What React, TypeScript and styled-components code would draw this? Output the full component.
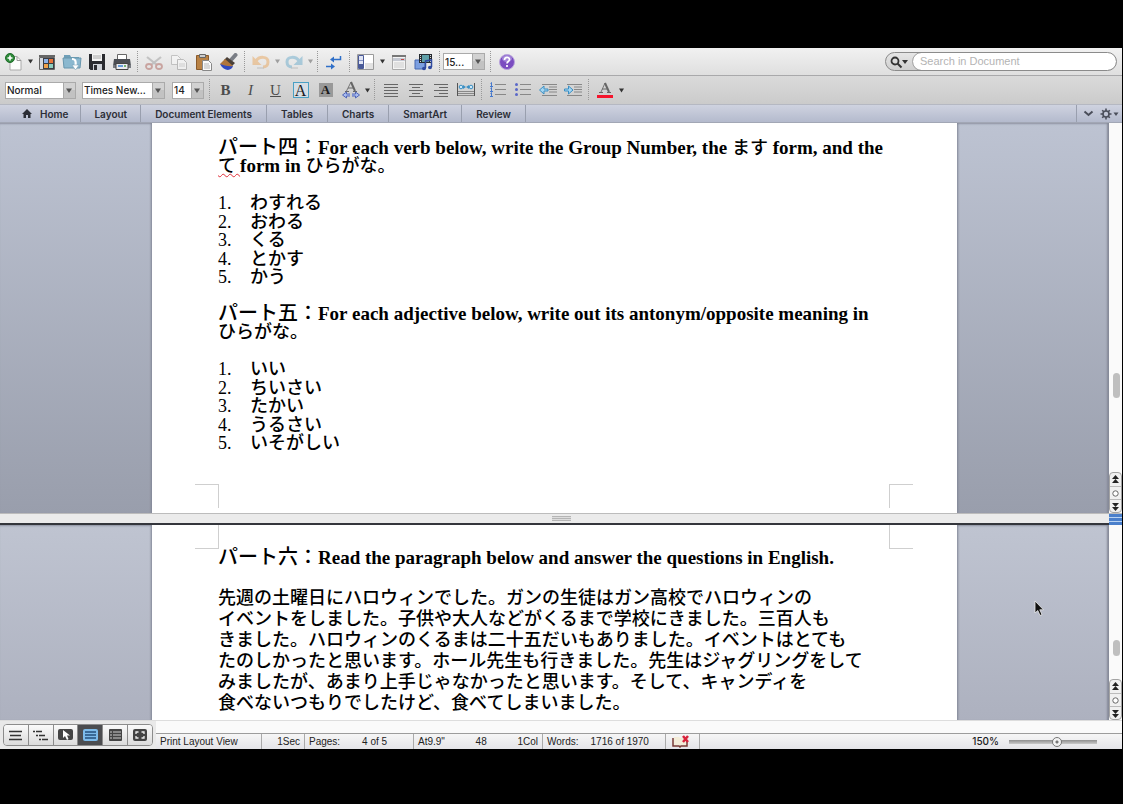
import React from "react";
import styled, { createGlobalStyle } from "styled-components";

const Global = createGlobalStyle`
  * { box-sizing: border-box; }
  html, body { margin: 0; background: #000; }
  body { font-family: "Liberation Sans", "Noto Sans CJK JP", sans-serif; color: #222; }
  button, input, select { font: inherit; color: inherit; margin: 0; }
`;

const Screen = styled.div`
  min-height: 100vh;
  display: flex;
  flex-direction: column;
  padding: 48px 1px 55px 0;
  background: #000;
`;

const Window = styled.main`
  flex: 1;
  display: flex;
  flex-direction: column;
  background: #fafafa;
`;

/* ---------- Toolbars ---------- */

const StandardBar = styled.div`
  display: flex;
  align-items: center;
  height: 28px;
  padding: 0 5px 0 1px;
  background: linear-gradient(#f1f1f1, #dfdfdf);
  border-bottom: 1px solid #a9a9ab;
`;

const FormatBar = styled.div`
  display: flex;
  align-items: center;
  height: 28px;
  padding-left: 5px;
  background: linear-gradient(#dadada, #cbcbcb);
`;

const ToolButton = styled.button<{ $faded?: boolean }>`
  display: flex;
  align-items: center;
  justify-content: center;
  width: 25px;
  height: 24px;
  padding: 0;
  border: 0;
  background: none;
  opacity: ${(p) => (p.$faded ? 0.4 : 1)};
  svg { display: block; }
`;

const ArrowButton = styled(ToolButton)`
  width: 8px;
`;

const Separator = styled.span`
  width: 7px;
  height: 22px;
  background: linear-gradient(#999 1px, transparent 1px) 3px 0 / 1px 2px repeat-y;
`;

const Glyph = styled.span<{ $italic?: boolean; $underline?: boolean }>`
  font: ${(p) => (p.$italic ? "italic" : p.$underline ? "normal" : "bold")} 15px/18px "Liberation Serif", serif;
  text-decoration: ${(p) => (p.$underline ? "underline" : "none")};
  color: #4c4c4c;
`;

const BoxedGlyph = styled.span<{ $shaded?: boolean }>`
  width: ${(p) => (p.$shaded ? 14 : 16)}px;
  height: ${(p) => (p.$shaded ? 14 : 16)}px;
  font: ${(p) => (p.$shaded ? "bold 13px/14px" : "16px/15px")} "Liberation Serif", serif;
  text-align: center;
  color: #1a1a1a;
  border: ${(p) => (p.$shaded ? "0" : "1px solid #4aa0c4")};
  background: ${(p) => (p.$shaded ? "#999" : "#d6dde4")};
`;

const Combo = styled.span<{ $width: number; $after?: number }>`
  position: relative;
  display: block;
  width: ${(p) => p.$width}px;
  height: 17px;
  margin-right: ${(p) => p.$after ?? 6}px;
  select {
    display: block;
    appearance: none;
    width: 100%;
    height: 17px;
    padding: 0 13px 0 1px;
    border: 1px solid #aaa;
    border-radius: 0;
    background: #fff;
    font: 500 10px/14px Inter, sans-serif;
    color: #222;
  }
  svg {
    position: absolute;
    right: 1px;
    top: 1px;
    pointer-events: none;
  }
`;

const SearchBox = styled.div`
  display: flex;
  width: 232px;
  height: 19px;
  margin-left: auto;
  border: 1px solid #8b8b8b;
  border-radius: 10px;
  background: linear-gradient(#e6e6e6, #cfcfcf);
  overflow: hidden;
  button {
    width: 27px;
    padding: 0 0 0 3px;
    border: 0;
    background: none;
  }
  svg { display: block; }
  input {
    flex: 1;
    min-width: 0;
    padding: 0 7px;
    border: 0;
    border-radius: 9px;
    background: #fff;
    font: 11px/17px "Liberation Sans", sans-serif;
    outline: 1px solid #a5a5a5;
  }
  input::placeholder { color: #b4b4b4; opacity: 1; }
`;

const Ribbon = styled.nav`
  display: flex;
  height: 19px;
  background: linear-gradient(#cfd3e0, #b4bacd);
  border-top: 1px solid #b5b8c2;
  border-bottom: 1px solid #a2a7b5;
`;

const Tab = styled.button`
  display: flex;
  align-items: center;
  gap: 8px;
  padding: 0 13px;
  border: 0;
  border-right: 1px solid #999fae;
  background: none;
  font: 600 10px/16px Inter, sans-serif;
  color: #2c2e36;
  &:first-child { padding: 0 12px 0 22px; }
  &:nth-child(n + 3) { padding: 0 14px; }
`;

const RibbonTools = styled.div`
  display: flex;
  align-items: center;
  gap: 4px;
  margin-left: auto;
  padding: 0 3px 0 6px;
  border-left: 1px solid #999fae;
`;

const RibbonButton = styled.button`
  display: flex;
  align-items: center;
  padding: 0;
  border: 0;
  background: none;
`;

/* ---------- Document panes ---------- */

const Pane = styled.section<{ $share: number; $from: string; $to: string }>`
  position: relative;
  flex: ${(p) => p.$share} 0 0;
  min-height: 0;
  display: flex;
  overflow: hidden;
  background: linear-gradient(${(p) => p.$from}, ${(p) => p.$to});
`;

const Desk = styled.div`
  flex: 1;
  display: flex;
  justify-content: center;
  height: 100%;
  box-shadow: inset -3px 0 2px -1px #858a98, inset 0 2px 2px -1px #8f94a2;
`;

const Page = styled.article`
  flex: 0 1 805px;
  padding: 0 67px 0 66px;
  background: #fff;
  box-shadow: 0 0 2px 1px #808594;
  color: #000;
  font: 18px/18px "Liberation Serif", "Noto Sans CJK JP", serif;
`;

const PageBody = styled.div`
  padding-top: 16px;
`;

const Heading = styled.h2`
  margin: 0 0 19px;
  font: bold 19px/18px "Liberation Serif", "Noto Sans CJK JP", serif;
  white-space: nowrap;
`;

const Label = styled.span`
  font: 500 20px/1px "Noto Sans CJK JP", sans-serif;
`;

const Kana = styled.span<{ $misspelt?: boolean }>`
  font: 500 18px/1px "Noto Sans CJK JP", sans-serif;
  text-decoration: ${(p) => (p.$misspelt ? "underline wavy #e0303a 1px" : "none")};
`;

const Items = styled.ol`
  display: grid;
  align-content: space-between;
  height: 92px;
  margin: 0 0 19px;
  padding: 0;
  list-style: none;
  counter-reset: item;
`;

const Item = styled.li`
  display: flex;
  align-items: baseline;
  height: 18px;
  counter-increment: item;
  &::before {
    content: counter(item) ".";
    width: 32px;
  }
`;

const Passage = styled.p`
  margin: 0;
  font: 500 18px/21px "Noto Sans CJK JP", sans-serif;
  white-space: nowrap;
`;

const Corners = styled.div<{ $bottom?: boolean }>`
  display: flex;
  justify-content: space-between;
  margin: ${(p) => (p.$bottom ? "32px" : "0")} -23px 0;
  span {
    width: 24px;
    height: 24px;
    border: 0 solid #cfcfcf;
    border-width: ${(p) => (p.$bottom ? "1px 1px 0 0" : "0 1px 1px 0")};
  }
  span + span {
    border-width: ${(p) => (p.$bottom ? "1px 0 0 1px" : "0 0 1px 1px")};
  }
`;

const Scroller = styled.div`
  width: 13px;
  display: flex;
  flex-direction: column;
  background: #fafafa;
`;

const Track = styled.div<{ $before: number; $after: number }>`
  flex: 1;
  display: flex;
  flex-direction: column;
  align-items: center;
  &::before { content: ""; flex: ${(p) => p.$before}; }
  &::after { content: ""; flex: ${(p) => p.$after}; }
`;

const Thumb = styled.span<{ $length: number }>`
  width: 7px;
  height: ${(p) => p.$length}px;
  margin-left: 2px;
  border-radius: 4px;
  background: #bfbfbf;
`;

const Browse = styled.div`
  border: 1px solid #a3a3a3;
  border-radius: 4px;
  background: #f0f0f0;
  overflow: hidden;
  button {
    display: flex;
    align-items: center;
    justify-content: center;
    width: 11px;
    height: 13px;
    padding: 0;
    border: 0;
    background: none;
  }
  button + button { border-top: 1px solid #bbb; }
`;

const Divider = styled.div`
  display: flex;
  height: 12px;
  padding-left: 13px;
  border-top: 1px solid #bcbcbc;
  border-bottom: 2px solid #34363c;
  background: #ebebeb;
`;

const Grip = styled.span`
  width: 19px;
  height: 5px;
  margin: 2px auto 0;
  border: 1px solid #b5b5b5;
  border-width: 1px 0;
  background: linear-gradient(#ddd 1px, #b5b5b5 1px, #b5b5b5 2px, #ddd 2px);
`;

const SplitHandle = styled.span`
  width: 13px;
  height: 11px;
  background: repeating-linear-gradient(#4a7fcb 0 3px, #b9d3f2 3px 4px);
`;

const Pointer = styled.svg`
  position: absolute;
  right: 78px;
  top: 75px;
`;

/* ---------- Status bar ---------- */

const Footer = styled.footer`
  display: flex;
  height: 29px;
  border-top: 1px solid #ddd;
  background: #fafafa;
`;

const ViewArea = styled.div`
  width: 156px;
  padding: 3px;
  background: #e9e9e9;
`;

const Views = styled.div`
  display: flex;
  height: 22px;
  border: 1px solid #8c8c8c;
  border-radius: 4px;
  overflow: hidden;
`;

const ViewButton = styled.button<{ $active?: boolean }>`
  flex: 1;
  display: flex;
  align-items: center;
  justify-content: center;
  padding: 0;
  border: 0;
  background: ${(p) => (p.$active ? "#4c4d50" : "linear-gradient(#fafafa, #dcdcdc)")};
  & + & { border-left: 1px solid #8c8c8c; }
`;

const StatusLine = styled.div`
  flex: 1;
  display: flex;
  align-items: center;
  height: 16px;
  margin-top: 12px;
  padding-right: 25px;
  border-top: 1px solid #9c9c9c;
  background: linear-gradient(#f6f6f6, #e4e4e8);
  font: 10px/15px "Liberation Sans", sans-serif;
  color: #222;
`;

const Cell = styled.span<{ $width: number; $end?: boolean }>`
  display: flex;
  align-items: center;
  justify-content: ${(p) => (p.$end ? "flex-end" : "space-between")};
  width: ${(p) => p.$width}px;
  height: 15px;
  padding: 0 4px;
  border-right: 1px solid #aaa;
  white-space: nowrap;
`;

const Count = styled.span`
  margin: 0 auto;
`;

const Zoom = styled.label`
  display: flex;
  align-items: center;
  gap: 10px;
  margin-left: auto;
  font: 500 10px/15px Inter, sans-serif;
  input {
    appearance: none;
    width: 88px;
    height: 10px;
    margin: 0;
    background: linear-gradient(#8e8e8e, #c9c9c9) 0 3px / 100% 4px no-repeat;
  }
  input::-webkit-slider-thumb {
    appearance: none;
    width: 10px;
    height: 10px;
    border: 1px solid #777;
    border-radius: 5px;
    background: radial-gradient(#777 0 1px, #f2f2f2 2px);
  }
`;

/* ---------- Icons ---------- */

const Caret = ({ color = "#333" }: { color?: string }) => (
  <svg width="5" height="5" viewBox="0 0 5 5"><path d="M0 0.5h5L2.5 4.5z" fill={color} /></svg>
);

const Drop = ({ label, faded }: { label: string; faded?: boolean }) => (
  <ArrowButton aria-label={label} $faded={faded}><Caret /></ArrowButton>
);

const Select = ({ label, value, width, after }: { label: string; value: string; width: number; after?: number }) => (
  <Combo $width={width} $after={after}>
    <select aria-label={label}><option>{value}</option></select>
    <svg width="12" height="15" viewBox="0 0 12 15">
      <path d="M0 0h12v15H0z" fill="#c2c2c2" /><path d="M0 0h12v7H0z" fill="#d2d2d2" />
      <path d="M0.5 0v15" stroke="#aaa" /><path d="M3 5.5h6L6 10z" fill="#555" />
    </svg>
  </Combo>
);

const I = ({ children, w = 20 }: { children: React.ReactNode; w?: number }) => (
  <svg width={w} height="18" viewBox={`0 0 ${w} 18`} fill="none">{children}</svg>
);

const NewIcon = () => (
  <I>
    <path d="M6 3.5h7l4 4V17H6z" fill="#fdfdfd" stroke="#aaa" />
    <path d="M13 3.5v4h4" stroke="#999" />
    <circle cx="6" cy="5" r="4.500" fill="#2e8b3a" stroke="#1f6b2a" />
    <path d="M6 2.500v5M3.500 5h5" stroke="#fff" strokeWidth="1.600" />
  </I>
);
const GalleryIcon = () => (
  <I>
    <path d="M2 2h16v2H2z" fill="#666" /><path d="M2.500 4.500h15v12h-15z" fill="#e8e8e8" stroke="#666" />
    <path d="M3 5h3v11H3z" fill="#d4d8de" /><path d="M6 5h11v11H6z" fill="#3a3d44" />
    <path d="M7 6h4v4H7z" fill="#8fb4e8" /><path d="M12 6h4v4h-4z" fill="#e8743a" />
    <path d="M7 11h4v4H7z" fill="#f0a14a" /><path d="M12 11h4v4h-4z" fill="#8ed0c0" />
  </I>
);
const OpenIcon = () => (
  <I>
    <path d="M2 2h6l1 2h8v3H2z" fill="#6f9fb8" /><path d="M1 5h18l-1 10H2z" fill="#8bb8cf" stroke="#6896ad" />
    <path d="M10 6c4 0 4 3 3.500 7" stroke="#fff" strokeWidth="2.200" /><path d="M10 12l3.500 5 3.500-5z" fill="#fff" stroke="#6896ad" strokeWidth=".5" />
  </I>
);
const SaveIcon = () => (
  <I>
    <path d="M2 1h16v16H3.500L2 15.500z" fill="#2a2b30" /><path d="M5 1h10v7H5z" fill="#f4f4f4" />
    <path d="M6 3h8M6 5h8" stroke="#aaa" /><path d="M6 11h9v6H6z" fill="#cfd2d8" /><path d="M7 12h3v5H7z" fill="#2a2b30" />
  </I>
);
const PrintIcon = () => (
  <I>
    <path d="M5.500 1.500h9V8h-9z" fill="#fff" stroke="#666" /><path d="M2 6h16l1 7H1z" fill="#4b4e54" />
    <path d="M1 12h18v3H1z" fill="#777b82" /><path d="M4 10.500h12v6H4z" fill="#e9ebf0" stroke="#444" /><path d="M6 13h5" stroke="#3b82d0" strokeWidth="1.500" /><path d="M12 13h2" stroke="#4aa04a" strokeWidth="1.500" />
  </I>
);
const CutIcon = () => (
  <I>
    <path d="M3 4l10 8M17 4L7 12" stroke="#888" strokeWidth="2.200" />
    <ellipse cx="5" cy="13.500" rx="3" ry="2.500" stroke="#a0443a" strokeWidth="1.800" /><ellipse cx="15" cy="13.500" rx="3" ry="2.500" stroke="#a0443a" strokeWidth="1.800" />
  </I>
);
const CopyIcon = () => (
  <I>
    <path d="M2.500 2.500h6l3 3v6h-9z" fill="#fff" stroke="#888" /><path d="M8.500 6.500h6l3 3v7h-9z" fill="#fff" stroke="#777" /><path d="M10 11h6M10 13h6" stroke="#aaa" />
  </I>
);
const PasteIcon = () => (
  <I>
    <path d="M2.500 2.500h12v14h-12z" fill="#b98245" stroke="#8a5a2b" /><path d="M5.500 1.500h6v3h-6z" fill="#ccc" stroke="#666" />
    <path d="M8.500 7.500h6l3 3v7h-9z" fill="#fafafa" stroke="#888" /><path d="M10 11h5M10 13h6M10 15h6" stroke="#b5b5b5" />
  </I>
);
const BrushIcon = () => (
  <I>
    <path d="M16.500 2L12 7" stroke="#7a7e86" strokeWidth="4" strokeLinecap="round" /><path d="M8 4l8 6-3 3-8-6z" fill="#4a4038" />
    <path d="M6 6l8 7-5 3-8-5z" fill="#b0763c" /><path d="M1 11c4 1 8 3 13 2-1 5-9 6-13-2z" fill="#2f49c0" />
  </I>
);
const UndoIcon = ({ redo }: { redo?: boolean }) => (
  <I>
    <g transform={redo ? "translate(20 0) scale(-1 1)" : undefined}>
      <path d="M5 8c3-5 12-5 12 1 0 3-2 5-5 5" stroke={redo ? "#4c9cc4" : "#e8963c"} strokeWidth="3" />
      <path d="M1.500 3v9h9z" fill={redo ? "#4c9cc4" : "#e8963c"} /><path d="M6 15h7" stroke="#888" />
    </g>
  </I>
);
const MarksIcon = () => (
  <I>
    <path d="M16.500 3v3.500H9" stroke="#2f6fc8" strokeWidth="1.500" /><path d="M10 3.500v6l-4-3z" fill="#2f6fc8" />
    <path d="M2 13.500h6" stroke="#2f6fc8" strokeWidth="1.500" /><path d="M7 10.500v6l4-3z" fill="#2f6fc8" />
  </I>
);
const SidebarIcon = () => (
  <I>
    <path d="M1.500 1.500h16v15h-16z" fill="#fff" stroke="#9a9a9a" /><path d="M2.500 2.500h5v13h-5z" fill="#dfe4f4" stroke="#4a5a98" />
    <path d="M3 11h4v4H3z" fill="#4a5a98" /><path d="M3 7.500h4" stroke="#8794c4" /><path d="M9 10h8v6H9z" fill="#e2e2e2" />
  </I>
);
const ToolboxIcon = () => (
  <I>
    <path d="M3.500 2.500h13v14h-13z" fill="#f4f4f4" stroke="#aaa" /><path d="M3 2h14v2H3z" fill="#777" /><path d="M4 5h12v3H4z" fill="#c5c9d2" />
    <path d="M12 6.500h3" stroke="#c04848" /><path d="M5 10h10M5 12h10M5 14h10" stroke="#ccc" />
  </I>
);
const MediaIcon = () => (
  <I>
    <path d="M1 7h10v9H1z" fill="#7c9fe0" stroke="#4668b0" /><path d="M5 1h13v9H5z" fill="#252a30" />
    <path d="M8 2h7v7H8z" fill="#5fa0a8" /><path d="M6.500 2v8M16.500 2v8" stroke="#ddd" strokeDasharray="1 1" />
    <path d="M11.500 15V8l6-1v7" stroke="#2f4aa0" strokeWidth="1.500" /><ellipse cx="10" cy="15.500" rx="2" ry="1.700" fill="#2f4aa0" /><ellipse cx="16" cy="14.500" rx="2" ry="1.700" fill="#2f4aa0" />
  </I>
);
const HelpIcon = () => (
  <I>
    <circle cx="10" cy="9" r="7.500" fill="#7a4cc0" stroke="#b9a4dc" /><ellipse cx="10" cy="5.500" rx="5" ry="3.500" fill="#a284d8" />
    <path d="M7.500 7c0-3.500 5-3.500 5-.5 0 2-2.500 2-2.500 4M10 12v2" stroke="#fff" strokeWidth="1.700" />
  </I>
);
const Lines = ({ rows }: { rows: [number, number][] }) => (
  <I>
    {rows.map(([a, b], i) => <path key={i} d={`M${a} ${3.5 + i * 3}H${b}`} stroke="#666" />)}
  </I>
);
const DistributeIcon = () => (
  <I>
    <path d="M1.500 2v13M18.500 2v13" stroke="#555" /><path d="M2 10.500h16M2 12.500h16M2 14.500h16" stroke="#888" />
    <path d="M4 6h4M12 6h4" stroke="#3a8fc4" /><circle cx="5" cy="6" r="1.800" stroke="#3a8fc4" fill="#cfe8f6" /><circle cx="15" cy="6" r="1.800" stroke="#3a8fc4" fill="#cfe8f6" /><path d="M7 4v4l3-2zM13 4v4l-3-2z" fill="#3a8fc4" />
  </I>
);
const ListIcon = ({ numbered }: { numbered?: boolean }) => (
  <I>
    {[3, 8, 13].map((y) => (
      <g key={y}>
        <path d={`M7 ${y}.5h11`} stroke="#888" />
        {numbered ? <path d={`M2.500 ${y - 1}.500l1-1v4m-1.500 0h3`} stroke="#4477cc" /> : <circle cx="3.500" cy={y + 0.5} r="1.500" fill="#5a68c8" />}
      </g>
    ))}
  </I>
);
const IndentIcon = ({ more }: { more?: boolean }) => (
  <I>
    <path d="M4 3.500h15M11 6h8M11 8.500h8M11 11h8M4 14.500h15" stroke="#888" />
    {more ? <path d="M1.500 8h4V5l4.500 4-4.500 4v-3h-4z" fill="#a5d6f2" stroke="#3a8fc4" /> : <path d="M10 8H6V5L1.500 9 6 13v-3h4z" fill="#a5d6f2" stroke="#3a8fc4" />}
  </I>
);
const SpacingIcon = () => (
  <I>
    <path d="M5.500 10L10 1" stroke="#777" /><path d="M10 1l4 9" stroke="#666" strokeWidth="2" /><path d="M7 7h6M4 10.500h4M12 10.500h4" stroke="#666" />
    <path d="M1.500 14l4-3v2h9v-2l4 3-4 3v-2h-9v2z" fill="#a9bcf0" stroke="#5267b8" /><path d="M10 11v6" stroke="#d0d0d0" strokeWidth="2" />
  </I>
);
const ColorIcon = () => (
  <I>
    <path d="M6 11L10 2" stroke="#777" /><path d="M10 2l4 9" stroke="#666" strokeWidth="2" /><path d="M7 8h6M4 11.500h4M12 11.500h4" stroke="#666" /><path d="M2 14h16v3H2z" fill="#f5142c" />
  </I>
);

/* ---------- Document content ---------- */

const verbs = ["わすれる", "おわる", "くる", "とかす", "かう"];
const adjectives = ["いい", "ちいさい", "たかい", "うるさい", "いそがしい"];
const passage = [
  "先週の土曜日にハロウィンでした。ガンの生徒はガン高校でハロウィンの",
  "イベントをしました。子供や大人などがくるまで学校にきました。三百人も",
  "きました。ハロウィンのくるまは二十五だいもありました。イベントはとても",
  "たのしかったと思います。ホール先生も行きました。先生はジャグリングをして",
  "みましたが、あまり上手じゃなかったと思います。そして、キャンディを",
  "食べないつもりでしたけど、食べてしまいました。",
];
const tabs = ["Layout", "Document Elements", "Tables", "Charts", "SmartArt", "Review"];

const WordList = ({ words }: { words: string[] }) => (
  <Items>{words.map((w) => <Item key={w}><Kana>{w}</Kana></Item>)}</Items>
);

const ScrollBar = ({ before, after, length }: { before: number; after: number; length: number }) => (
  <Scroller>
    <Track $before={before} $after={after}><Thumb $length={length} /></Track>
    <Browse>
      <button aria-label="Previous page"><svg width="7" height="9" viewBox="0 0 7 9"><path d="M3.500 0L7 4H0zM3.500 4L7 8H0z" fill="#222" /></svg></button>
      <button aria-label="Select browse object"><svg width="7" height="7" viewBox="0 0 7 7"><circle cx="3.500" cy="3.500" r="2.700" fill="#fff" stroke="#666" /></svg></button>
      <button aria-label="Next page"><svg width="7" height="9" viewBox="0 0 7 9"><path d="M0 1h7L3.500 5zM0 5h7L3.500 9z" fill="#222" /></svg></button>
    </Browse>
  </Scroller>
);

export default function App() {
  return (
    <Screen>
      <Global />
      <Window>
        <StandardBar role="toolbar" aria-label="Standard">
          <ToolButton aria-label="New"><NewIcon /></ToolButton>
          <Drop label="New options" />
          <ToolButton aria-label="Templates"><GalleryIcon /></ToolButton>
          <ToolButton aria-label="Open"><OpenIcon /></ToolButton>
          <ToolButton aria-label="Save"><SaveIcon /></ToolButton>
          <ToolButton aria-label="Print"><PrintIcon /></ToolButton>
          <Separator />
          <ToolButton aria-label="Cut" $faded><CutIcon /></ToolButton>
          <ToolButton aria-label="Copy" $faded><CopyIcon /></ToolButton>
          <ToolButton aria-label="Paste"><PasteIcon /></ToolButton>
          <ToolButton aria-label="Format painter"><BrushIcon /></ToolButton>
          <Separator />
          <ToolButton aria-label="Undo" $faded><UndoIcon /></ToolButton>
          <Drop label="Undo history" faded />
          <ToolButton aria-label="Redo" $faded><UndoIcon redo /></ToolButton>
          <Drop label="Redo history" faded />
          <Separator />
          <ToolButton aria-label="Show marks"><MarksIcon /></ToolButton>
          <Separator />
          <ToolButton aria-label="Sidebar"><SidebarIcon /></ToolButton>
          <Drop label="Sidebar options" />
          <ToolButton aria-label="Toolbox"><ToolboxIcon /></ToolButton>
          <ToolButton aria-label="Media browser"><MediaIcon /></ToolButton>
          <Separator />
          <Select label="Zoom" value="15..." width={42} after={2} />
          <Separator />
          <ToolButton aria-label="Help"><HelpIcon /></ToolButton>
          <SearchBox>
            <button aria-label="Search options">
              <svg width="21" height="14" viewBox="0 0 21 14" fill="none"><circle cx="6" cy="6" r="3.500" stroke="#333" strokeWidth="1.800" /><path d="M8.500 8.500l4 4" stroke="#333" strokeWidth="2" /><path d="M13 5h6l-3 4z" fill="#333" /></svg>
            </button>
            <input type="search" aria-label="Search in Document" placeholder="Search in Document" />
          </SearchBox>
        </StandardBar>

        <FormatBar role="toolbar" aria-label="Formatting">
          <Select label="Style" value="Normal" width={71} />
          <Select label="Font" value="Times New..." width={83} after={7} />
          <Select label="Size" value="14" width={32} after={2} />
          <Separator />
          <ToolButton aria-label="Bold"><Glyph>B</Glyph></ToolButton>
          <ToolButton aria-label="Italic"><Glyph $italic>I</Glyph></ToolButton>
          <ToolButton aria-label="Underline"><Glyph $underline>U</Glyph></ToolButton>
          <ToolButton aria-label="Border"><BoxedGlyph>A</BoxedGlyph></ToolButton>
          <ToolButton aria-label="Shading"><BoxedGlyph $shaded>A</BoxedGlyph></ToolButton>
          <ToolButton aria-label="Character scaling"><SpacingIcon /></ToolButton>
          <Drop label="Scaling options" />
          <Separator />
          <ToolButton aria-label="Justify"><Lines rows={[[3, 17], [3, 17], [3, 17], [3, 17], [3, 17]]} /></ToolButton>
          <ToolButton aria-label="Center"><Lines rows={[[3, 17], [6, 14], [3, 17], [6, 14], [3, 17]]} /></ToolButton>
          <ToolButton aria-label="Align right"><Lines rows={[[3, 17], [8, 17], [3, 17], [8, 17], [3, 17]]} /></ToolButton>
          <ToolButton aria-label="Distribute"><DistributeIcon /></ToolButton>
          <Separator />
          <ToolButton aria-label="Numbered list"><ListIcon numbered /></ToolButton>
          <ToolButton aria-label="Bulleted list"><ListIcon /></ToolButton>
          <ToolButton aria-label="Decrease indent"><IndentIcon /></ToolButton>
          <ToolButton aria-label="Increase indent"><IndentIcon more /></ToolButton>
          <Separator />
          <ToolButton aria-label="Font color"><ColorIcon /></ToolButton>
          <Drop label="Font color options" />
        </FormatBar>

        <Ribbon aria-label="Ribbon">
          <Tab>
            <svg width="10" height="9" viewBox="0 0 10 9"><path d="M5 0l5 5H8.500v4h-2.500V6H4v3H1.500V5H0z" fill="#2c2e36" /></svg>
            Home
          </Tab>
          {tabs.map((t) => <Tab key={t}>{t}</Tab>)}
          <RibbonTools>
            <RibbonButton aria-label="Collapse ribbon"><svg width="11" height="7" viewBox="0 0 11 7" fill="none"><path d="M1.500 1.500l4 3.500 4-3.500" stroke="#4a4e5a" strokeWidth="2" /></svg></RibbonButton>
            <RibbonButton aria-label="Ribbon settings">
              <svg width="21" height="12" viewBox="0 0 21 12" fill="none"><circle cx="8" cy="6" r="3" stroke="#4a4e5a" strokeWidth="1.600" /><path d="M8 .5V3M8 9v2.500M2.500 6H5M11 6h2.500M4.200 2.200l1.600 1.600M10.200 8.200l1.600 1.600M11.800 2.200l-1.600 1.600M5.800 8.200L4.200 9.800" stroke="#4a4e5a" strokeWidth="1.600" /><path d="M15.500 4.500h5L18 8z" fill="#4a4e5a" /></svg>
            </RibbonButton>
          </RibbonTools>
        </Ribbon>

        <Pane $share={2} $from="#bdc3d2" $to="#999eac">
          <Desk>
            <Page>
              <PageBody>
                <Heading>
                  <Label>パート四：</Label>For each verb below, write the Group Number, the <Kana>ます</Kana> form, and the<br />
                  <Kana $misspelt>て </Kana>form in <Kana>ひらがな。</Kana>
                </Heading>
                <WordList words={verbs} />
                <Heading>
                  <Label>パート五：</Label>For each adjective below, write out its antonym/opposite meaning in<br />
                  <Kana>ひらがな。</Kana>
                </Heading>
                <WordList words={adjectives} />
              </PageBody>
              <Corners $bottom><span /><span /></Corners>
            </Page>
          </Desk>
          <ScrollBar before={252} after={74} length={25} />
        </Pane>

        <Divider><Grip /><SplitHandle /></Divider>

        <Pane $share={1} $from="#bfc4d1" $to="#adb1bf">
          <Desk>
            <Page>
              <Corners><span /><span /></Corners>
              <Heading><Label>パート六：</Label>Read the paragraph below and answer the questions in English.</Heading>
              <Passage>{passage.map((line) => <React.Fragment key={line}>{line}<br /></React.Fragment>)}</Passage>
            </Page>
          </Desk>
          <ScrollBar before={115} after={23} length={16} />
          <Pointer width="10" height="17" viewBox="0 0 10 17"><path d="M1 1v12l2.800-2.500L6 15.500l2-.9-2.200-4.800h3.700z" fill="#111" stroke="#eee" strokeWidth=".8" /></Pointer>
        </Pane>

        <Footer>
          <ViewArea>
            <Views>
              <ViewButton aria-label="Draft view"><svg width="13" height="11" viewBox="0 0 13 11"><path d="M0 1.500h13M1 5.500h11M0 9.500h13" stroke="#333" strokeWidth="1.500" /></svg></ViewButton>
              <ViewButton aria-label="Outline view"><svg width="15" height="11" viewBox="0 0 15 11"><path d="M0 1.500h2M3 1.500h6M3 5.500h2M6 5.500h6M6 9.500h2M9 9.500h6" stroke="#333" strokeWidth="1.500" /></svg></ViewButton>
              <ViewButton aria-label="Publishing view"><svg width="15" height="12" viewBox="0 0 15 12"><rect width="15" height="11" rx="2" fill="#444" /><path d="M5 1v8l2-2 2 4 1.500-1L9 6.500h3z" fill="#fff" /></svg></ViewButton>
              <ViewButton aria-label="Print layout view" $active><svg width="15" height="12" viewBox="0 0 15 12"><rect width="15" height="12" rx="2" fill="#7dbbea" /><path d="M2 3h11M2 6h11M2 9h11" stroke="#24507c" strokeWidth="1.300" /></svg></ViewButton>
              <ViewButton aria-label="Notebook view"><svg width="13" height="12" viewBox="0 0 13 12"><rect width="13" height="12" rx="1" fill="#444" /><path d="M1 3h2M4 3h8M1 6h2M4 6h8M1 9h2M4 9h8" stroke="#ccc" /></svg></ViewButton>
              <ViewButton aria-label="Full screen view"><svg width="14" height="12" viewBox="0 0 14 12"><rect width="14" height="12" rx="2" fill="#444" /><path d="M3 5V3h2.500M8.500 3H11v2M11 7v2H8.500M5.500 9H3V7" stroke="#eee" strokeWidth="1.300" fill="none" /></svg></ViewButton>
            </Views>
          </ViewArea>
          <StatusLine>
            <Cell $width={106}>Print Layout View</Cell>
            <Cell $width={43} $end>1Sec</Cell>
            <Cell $width={109}><span>Pages:</span><Count>4 of 5</Count></Cell>
            <Cell $width={129}><span>At9.9"</span><span>48</span><span>1Col</span></Cell>
            <Cell $width={123}><span>Words:</span><Count>1716 of 1970</Count></Cell>
            <Cell $width={34}>
              <svg width="20" height="13" viewBox="0 0 20 13" fill="none"><path d="M3 3v8h6l1 1 1-1h6V6" stroke="#7a3b34" strokeWidth="1.500" /><path d="M4 2h5l1 1v7H4zM10 3h6v7h-6z" fill="#f3ecd8" /><path d="M13 1l5 6M18 1l-5 6" stroke="#d8243c" strokeWidth="2.500" /></svg>
            </Cell>
            <Zoom>150%<input type="range" min="50" max="230" defaultValue="150" aria-label="Zoom level" /></Zoom>
          </StatusLine>
        </Footer>
      </Window>
    </Screen>
  );
}
